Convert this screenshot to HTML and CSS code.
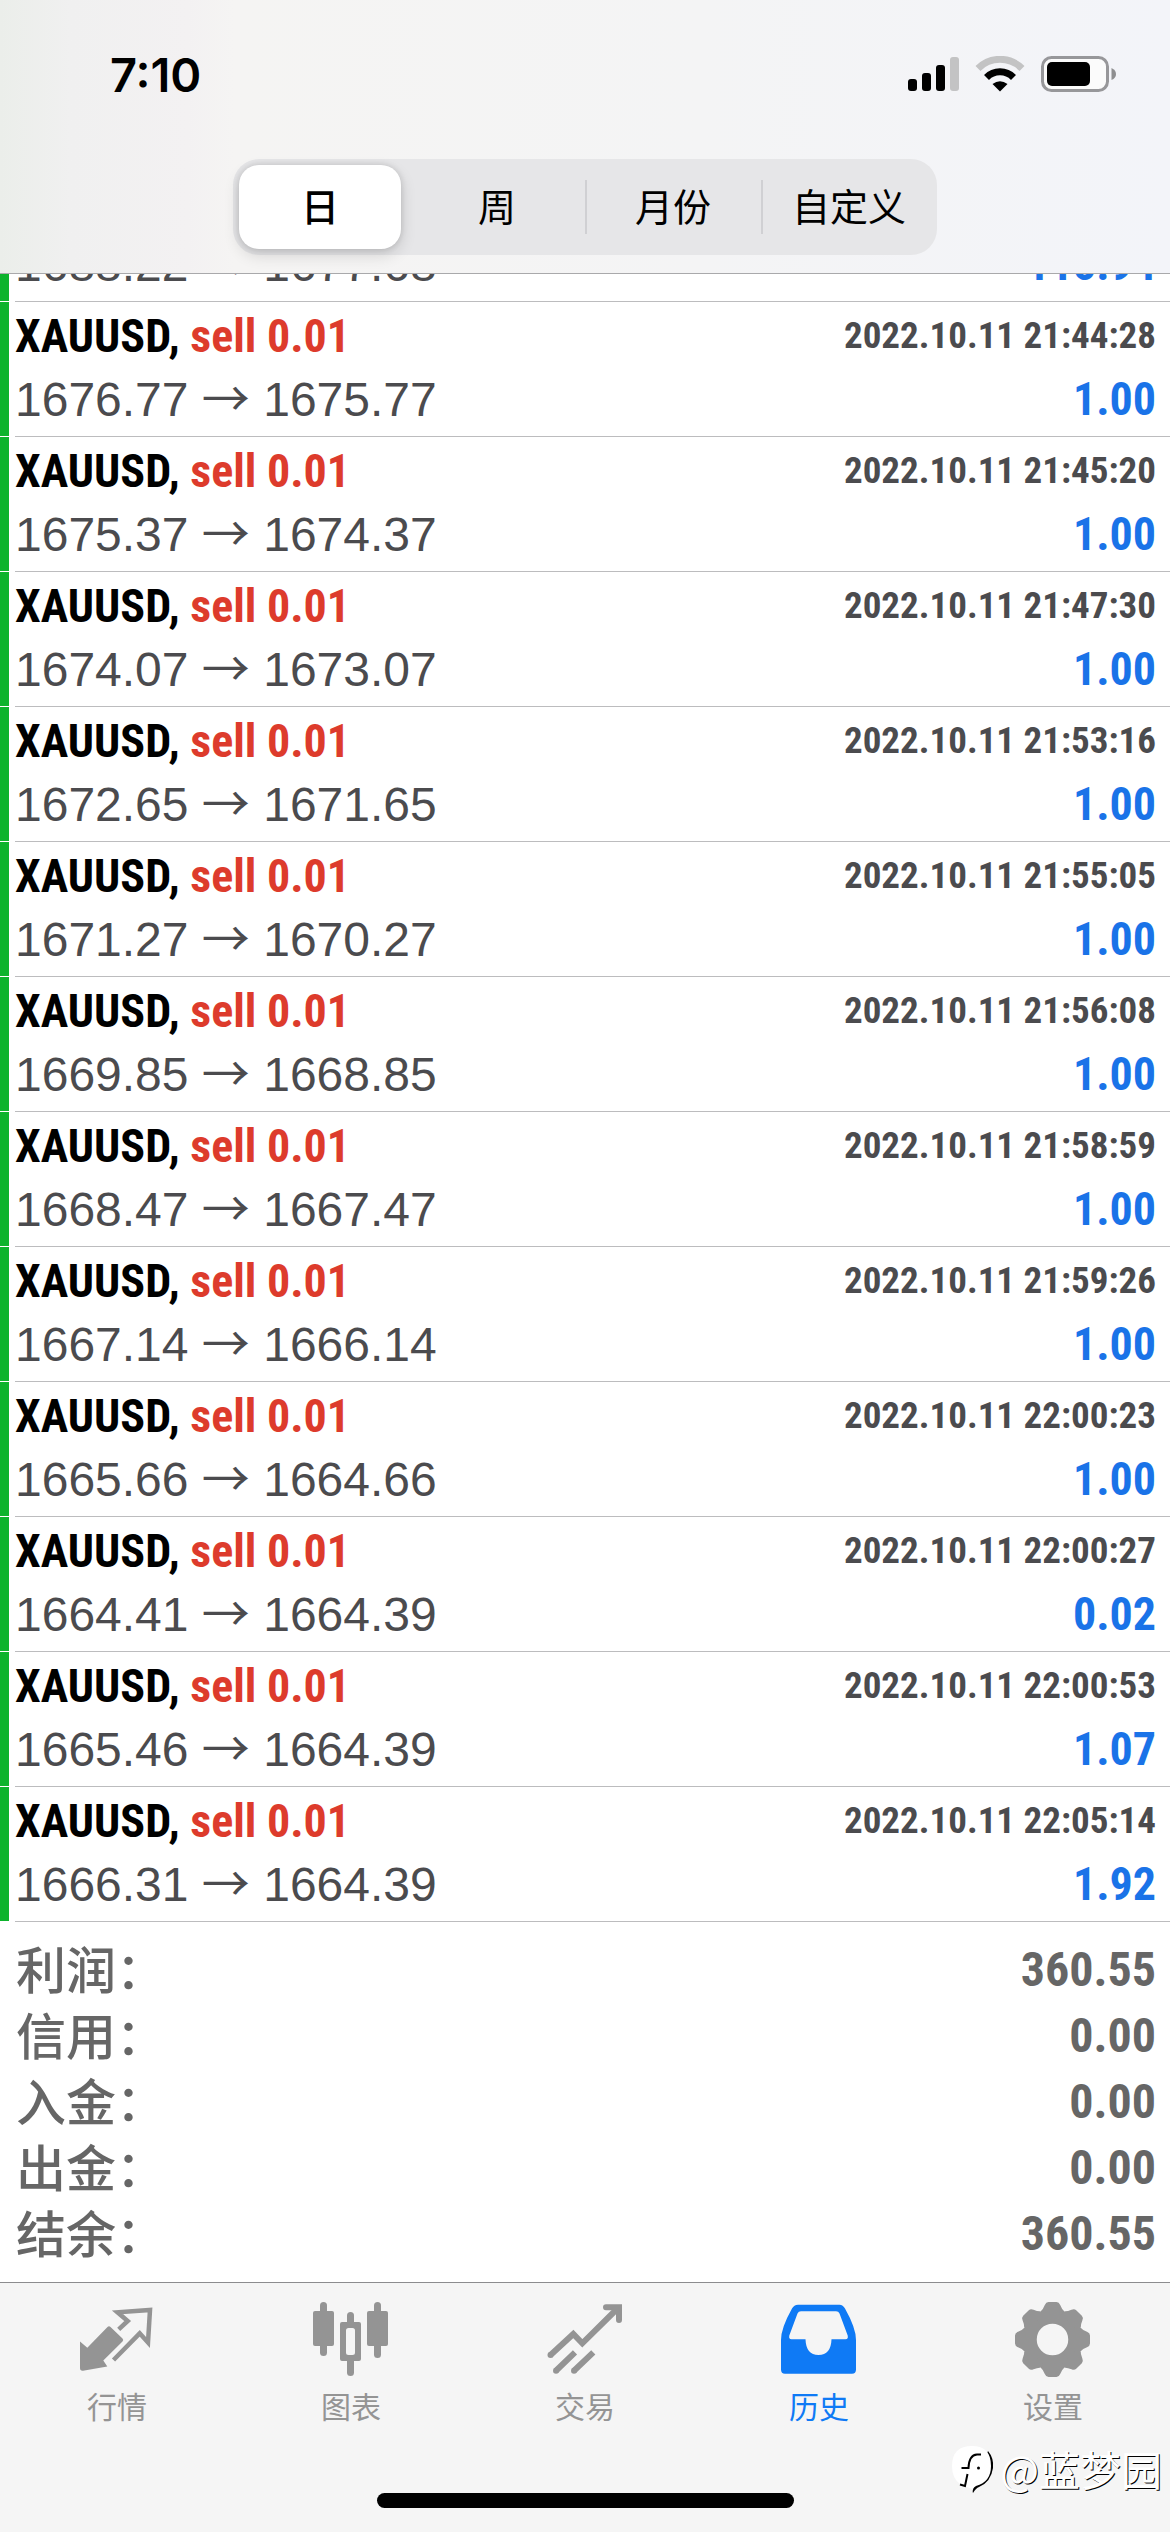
FILE: index.html
```
<!DOCTYPE html>
<html lang="zh-CN">
<head>
<meta charset="utf-8">
<meta name="viewport" content="width=device-width, initial-scale=1">
<title>历史</title>
<link rel="stylesheet" href="styles.css">
</head>
<body>
<div class="app">
  <header class="header">
    <div class="status">
      <span class="time">7:10</span>
      <div class="status-icons">
        <svg width="51" height="36" viewBox="0 0 51 36" aria-hidden="true">
          <rect x="0" y="23" width="9" height="12" rx="3"/>
          <rect x="14" y="17" width="9" height="18" rx="3"/>
          <rect x="28" y="9" width="9" height="26" rx="3"/>
          <rect x="42" y="1" width="9" height="34" rx="3" fill="#c3c3c4"/>
        </svg>
        <svg width="50" height="36" viewBox="0 0 50 36" aria-hidden="true">
          <path d="M3 12.500a31 31 0 0 1 44 0" fill="none" stroke="#c3c3c4" stroke-width="7"/>
          <path d="M11.500 21.500a19 19 0 0 1 27 0" fill="none" stroke="#000" stroke-width="7"/>
          <path d="M25 35.500l-7.500-7.500q7.500-5.500 15 0z"/>
        </svg>
        <svg width="75" height="36" viewBox="0 0 75 36" aria-hidden="true">
          <rect x="1.500" y="1.500" width="65" height="33" rx="9" fill="#fbfbfb" stroke="#97979a" stroke-width="3"/>
          <rect x="6" y="6" width="43" height="24" rx="5"/>
          <path d="M70.500 12q4.500 2 4.500 6t-4.500 6z" fill="#8e8e90"/>
        </svg>
      </div>
    </div>
    <div class="segments">
      <button class="segment active" type="button" aria-pressed="true">日</button>
      <button class="segment" type="button" aria-pressed="false">周</button>
      <button class="segment" type="button" aria-pressed="false">月份</button>
      <button class="segment" type="button" aria-pressed="false">自定义</button>
    </div>
  </header>

  <main class="main">
    <ol class="deals">
      <li class="deal"><div class="body">
        <div class="line"><span class="symbol">XAUUSD, <span class="side">sell 0.11</span></span><time class="date">2022.10.11 21:42:16</time></div>
        <div class="line"><span class="price">1688.22 <span class="arrow">→</span> 1677.68</span><span class="profit">115.94</span></div>
      </div></li>
      <li class="deal"><div class="body">
        <div class="line"><span class="symbol">XAUUSD, <span class="side">sell 0.01</span></span><time class="date">2022.10.11 21:44:28</time></div>
        <div class="line"><span class="price">1676.77 <span class="arrow">→</span> 1675.77</span><span class="profit">1.00</span></div>
      </div></li>
      <li class="deal"><div class="body">
        <div class="line"><span class="symbol">XAUUSD, <span class="side">sell 0.01</span></span><time class="date">2022.10.11 21:45:20</time></div>
        <div class="line"><span class="price">1675.37 <span class="arrow">→</span> 1674.37</span><span class="profit">1.00</span></div>
      </div></li>
      <li class="deal"><div class="body">
        <div class="line"><span class="symbol">XAUUSD, <span class="side">sell 0.01</span></span><time class="date">2022.10.11 21:47:30</time></div>
        <div class="line"><span class="price">1674.07 <span class="arrow">→</span> 1673.07</span><span class="profit">1.00</span></div>
      </div></li>
      <li class="deal"><div class="body">
        <div class="line"><span class="symbol">XAUUSD, <span class="side">sell 0.01</span></span><time class="date">2022.10.11 21:53:16</time></div>
        <div class="line"><span class="price">1672.65 <span class="arrow">→</span> 1671.65</span><span class="profit">1.00</span></div>
      </div></li>
      <li class="deal"><div class="body">
        <div class="line"><span class="symbol">XAUUSD, <span class="side">sell 0.01</span></span><time class="date">2022.10.11 21:55:05</time></div>
        <div class="line"><span class="price">1671.27 <span class="arrow">→</span> 1670.27</span><span class="profit">1.00</span></div>
      </div></li>
      <li class="deal"><div class="body">
        <div class="line"><span class="symbol">XAUUSD, <span class="side">sell 0.01</span></span><time class="date">2022.10.11 21:56:08</time></div>
        <div class="line"><span class="price">1669.85 <span class="arrow">→</span> 1668.85</span><span class="profit">1.00</span></div>
      </div></li>
      <li class="deal"><div class="body">
        <div class="line"><span class="symbol">XAUUSD, <span class="side">sell 0.01</span></span><time class="date">2022.10.11 21:58:59</time></div>
        <div class="line"><span class="price">1668.47 <span class="arrow">→</span> 1667.47</span><span class="profit">1.00</span></div>
      </div></li>
      <li class="deal"><div class="body">
        <div class="line"><span class="symbol">XAUUSD, <span class="side">sell 0.01</span></span><time class="date">2022.10.11 21:59:26</time></div>
        <div class="line"><span class="price">1667.14 <span class="arrow">→</span> 1666.14</span><span class="profit">1.00</span></div>
      </div></li>
      <li class="deal"><div class="body">
        <div class="line"><span class="symbol">XAUUSD, <span class="side">sell 0.01</span></span><time class="date">2022.10.11 22:00:23</time></div>
        <div class="line"><span class="price">1665.66 <span class="arrow">→</span> 1664.66</span><span class="profit">1.00</span></div>
      </div></li>
      <li class="deal"><div class="body">
        <div class="line"><span class="symbol">XAUUSD, <span class="side">sell 0.01</span></span><time class="date">2022.10.11 22:00:27</time></div>
        <div class="line"><span class="price">1664.41 <span class="arrow">→</span> 1664.39</span><span class="profit">0.02</span></div>
      </div></li>
      <li class="deal"><div class="body">
        <div class="line"><span class="symbol">XAUUSD, <span class="side">sell 0.01</span></span><time class="date">2022.10.11 22:00:53</time></div>
        <div class="line"><span class="price">1665.46 <span class="arrow">→</span> 1664.39</span><span class="profit">1.07</span></div>
      </div></li>
      <li class="deal"><div class="body">
        <div class="line"><span class="symbol">XAUUSD, <span class="side">sell 0.01</span></span><time class="date">2022.10.11 22:05:14</time></div>
        <div class="line"><span class="price">1666.31 <span class="arrow">→</span> 1664.39</span><span class="profit">1.92</span></div>
      </div></li>
    </ol>
    <dl class="summary">
      <div class="total"><dt>利润：</dt><dd>360.55</dd></div>
      <div class="total"><dt>信用：</dt><dd>0.00</dd></div>
      <div class="total"><dt>入金：</dt><dd>0.00</dd></div>
      <div class="total"><dt>出金：</dt><dd>0.00</dd></div>
      <div class="total"><dt>结余：</dt><dd>360.55</dd></div>
    </dl>
  </main>

  <footer class="footer">
    <nav class="tabs">
      <a class="tab" href="#quotes">
        <svg class="icon" viewBox="0 0 76 76" aria-hidden="true">
          <path d="M1 39.500L8.300 45.700 28.500 25q1.500-1.500 3 0L43.500 36.500q1.500 1.500 0 3L24.300 58.500 28.300 64.500 4 68.700Q1 69 1 66z"/>
          <path d="M39.700 27.300L48.700 19 38.500 10.300 71 8 69 40.500 60.700 31.300 34.500 58" fill="none" stroke="currentColor" stroke-width="4.500"/>
        </svg>
        <span>行情</span>
      </a>
      <a class="tab" href="#charts">
        <svg class="icon" viewBox="0 0 76 76" aria-hidden="true">
          <rect x="7" y="0" width="7" height="54" rx="3.500"/><rect x="0" y="9" width="21" height="35" rx="2"/>
          <rect x="61" y="0" width="7" height="56" rx="3.500"/><rect x="54" y="9" width="21" height="35" rx="2"/>
          <rect x="34" y="10" width="7" height="14" rx="3.500"/><rect x="34" y="54" width="7" height="20" rx="3.500"/>
          <path fill-rule="evenodd" d="M29 20h17a2 2 0 0 1 2 2v35a2 2 0 0 1-2 2H29a2 2 0 0 1-2-2V22a2 2 0 0 1 2-2zM35.500 26a2.500 2.500 0 0 0-2.500 2.500v22a2.500 2.500 0 0 0 2.500 2.500h4a2.500 2.500 0 0 0 2.500-2.500v-22a2.500 2.500 0 0 0-2.500-2.500z"/>
        </svg>
        <span>图表</span>
      </a>
      <a class="tab" href="#trade">
        <svg class="icon" viewBox="0 0 76 76" aria-hidden="true">
          <g fill="none" stroke="currentColor" stroke-width="6">
            <path stroke-linecap="round" d="M59 5.200H72V18"/>
            <path d="M3 53.500L26.300 32 35.300 41.300 71 6"/>
            <path d="M8.700 69L28 50.300M26.700 69L46.300 50.300"/>
          </g>
          <circle cx="3.500" cy="53" r="3"/><circle cx="9" cy="68.700" r="3"/><circle cx="27" cy="68.700" r="3"/>
        </svg>
        <span>交易</span>
      </a>
      <a class="tab current" href="#history" aria-current="page">
        <svg class="icon" viewBox="0 0 76 76" aria-hidden="true">
          <path fill-rule="evenodd" d="M17 2.700H58.500Q62 2.700 64 6.500 75 26 75 38V67.500Q75 71.700 71 71.700H4Q0 71.700 0 67.500V38Q0 26 11 6.500 13 2.700 17 2.700zM20 9.300Q17.500 9.300 16.500 11.500L8.300 33.500Q7.500 37.300 10.500 37.300H24.500Q25 53 37.500 53T50.500 37.300H64.500Q67.500 37.300 66.700 33.500L58.500 11.500Q57.500 9.300 55 9.300z"/>
        </svg>
        <span>历史</span>
      </a>
      <a class="tab" href="#settings">
        <svg class="icon" viewBox="0 0 76 76" aria-hidden="true">
          <defs><path id="tooth" d="M-11.500-28.500Q-9.500-30-7.700-34.500-6.500-37.500-4-37.500H4Q6.500-37.500 7.700-34.500 9.500-30 11.500-28.500V-24h-23z"/></defs>
          <g transform="translate(37.500 37.500)">
            <circle r="22.500" fill="none" stroke="currentColor" stroke-width="13.500"/>
            <use href="#tooth"/><use href="#tooth" transform="rotate(45)"/><use href="#tooth" transform="rotate(90)"/><use href="#tooth" transform="rotate(135)"/>
            <use href="#tooth" transform="rotate(180)"/><use href="#tooth" transform="rotate(225)"/><use href="#tooth" transform="rotate(270)"/><use href="#tooth" transform="rotate(315)"/>
          </g>
        </svg>
        <span>设置</span>
      </a>
    </nav>
    <div class="home-indicator"></div>
    <div class="watermark">
      <svg width="42" height="48" viewBox="0 0 42 48" aria-hidden="true">
        <path d="M36 5Q42 12 41 22 39 36 27 41 24 42 21 47 20 45 22 41z" fill="#000"/>
        <path d="M20 0Q39 0 39 20 39 36 24 40L20 43 8 38Q0 32 0 20 0 0 20 0z" fill="#fff"/>
        <path d="M29 8.500H25Q17 9 16.500 22H9.500M15.500 28L13 40 8 38.500" fill="none" stroke="#000" stroke-width="2"/>
        <circle cx="26.500" cy="22" r="1.500"/>
      </svg>
      <span>@蓝梦园</span>
    </div>
  </footer>
</div>
</body>
</html>
```
FILE: styles.css
```
* {
  box-sizing: border-box;
}

body {
  margin: 0;
  background: #fff;
  font-family: "Liberation Sans", "Noto Sans CJK SC", sans-serif;
  color: #000;
}

.app {
  display: flex;
  flex-direction: column;
  min-height: 100vh;
}

/* Header */
.header {
  padding-bottom: 18px;
  border-bottom: 1px solid #a9a9ab;
  background: linear-gradient(90deg, #ebeeea 0%, #f0f0f0 6%, #f3f1f2 16%, #f5f4f3 20%, #f4f4f5 60%, #f3f4f9 100%);
}

.status {
  display: flex;
  align-items: center;
  justify-content: space-between;
  height: 148px;
  padding: 0 54px 0 110px;
}

.time {
  font-family: Inter, sans-serif;
  font-size: 47px;
  font-weight: 600;
}

.status-icons {
  display: flex;
  gap: 16px;
}

.segments {
  display: flex;
  width: 704px;
  max-width: 100%;
  height: 96px;
  margin: 11px auto 0;
  padding: 6px 0 6px 6px;
  border-radius: 26px;
  background: #e6e6e8;
}

.segment {
  flex: 1;
  margin: 0;
  padding: 0 0 6px;
  border: 0;
  background: linear-gradient(#d0d0d3, #d0d0d3) left center / 2px 54px no-repeat;
  font-family: "Noto Sans CJK SC", sans-serif;
  font-size: 38px;
  color: #000;
}

.segment.active {
  flex: 0 0 162px;
  margin-right: 8px;
  border-radius: 20px;
  background: #fff;
  font-weight: 500;
  box-shadow: 0 6px 16px rgba(0, 0, 0, 0.14), 0 0 6px rgba(0, 0, 0, 0.14);
}

.segment.active + .segment {
  background: none;
}

/* Deals */
.main {
  flex: 1;
  overflow: hidden;
}

/* The list rests scrolled, with its first row partly under the header */
.deals {
  margin: -107px 0 0;
  padding: 0;
  list-style: none;
}

.deal {
  display: grid;
  grid-template-columns: 9px 1fr;
  column-gap: 6px;
}

.deal::before {
  content: "";
  margin-bottom: 1px;
  background: #0cb32c;
}

.body {
  display: grid;
  gap: 7px;
  padding: 6px 14px 9px 0;
  border-bottom: 1px solid #bcbcbe;
}

.line {
  display: flex;
  align-items: center;
  justify-content: space-between;
  height: 56px;
  line-height: 56px;
  white-space: pre;
}

.symbol,
.date,
.profit,
.total dd {
  font-family: "Roboto Condensed", Roboto, sans-serif;
  font-weight: 700;
}

.symbol,
.profit {
  font-size: 46px;
}

.side {
  color: #dd3b2c;
}

.date {
  font-size: 37px;
  color: #4b4b4e;
}

.price {
  font-size: 48px;
  color: #4b4b4e;
}

.arrow {
  font-family: "Noto Sans CJK SC", sans-serif;
  line-height: 1;
}

.profit {
  color: #1a73e8;
}

/* Totals */
.summary {
  margin: 0;
  padding: 15px 14px 15px 16px;
  color: #666;
}

.total {
  display: flex;
  justify-content: space-between;
  height: 66px;
}

.total dt {
  font-family: "Noto Sans CJK SC", sans-serif;
  font-size: 50px;
  font-weight: 500;
  line-height: 60px;
}

.total dd {
  margin: 0;
  font-size: 48px;
  line-height: 66px;
}

/* Tab bar */
.footer {
  position: relative;
  padding: 19px 0 24px;
  border-top: 1px solid #8c8c8e;
  background: #f5f5f5;
}

.tabs {
  display: grid;
  grid-template-columns: repeat(5, 1fr);
}

.tab {
  display: flex;
  flex-direction: column;
  align-items: center;
  gap: 7px;
  font-family: "Noto Sans CJK SC", sans-serif;
  font-size: 30px;
  line-height: 40px;
  color: #949494;
  text-decoration: none;
}

.tab.current {
  color: #0f7af5;
}

.icon {
  width: 76px;
  height: 76px;
  fill: currentColor;
}

.home-indicator {
  width: 417px;
  height: 15px;
  margin: 68px auto 0;
  border-radius: 8px;
  background: #000;
}

.watermark {
  position: absolute;
  right: 8px;
  bottom: 38px;
  display: flex;
  align-items: flex-end;
  gap: 6px;
  font-family: "Noto Sans CJK SC", sans-serif;
  font-size: 41px;
  line-height: 52px;
  color: #fff;
  text-shadow: 1px 1px 0 #000;
}
```
